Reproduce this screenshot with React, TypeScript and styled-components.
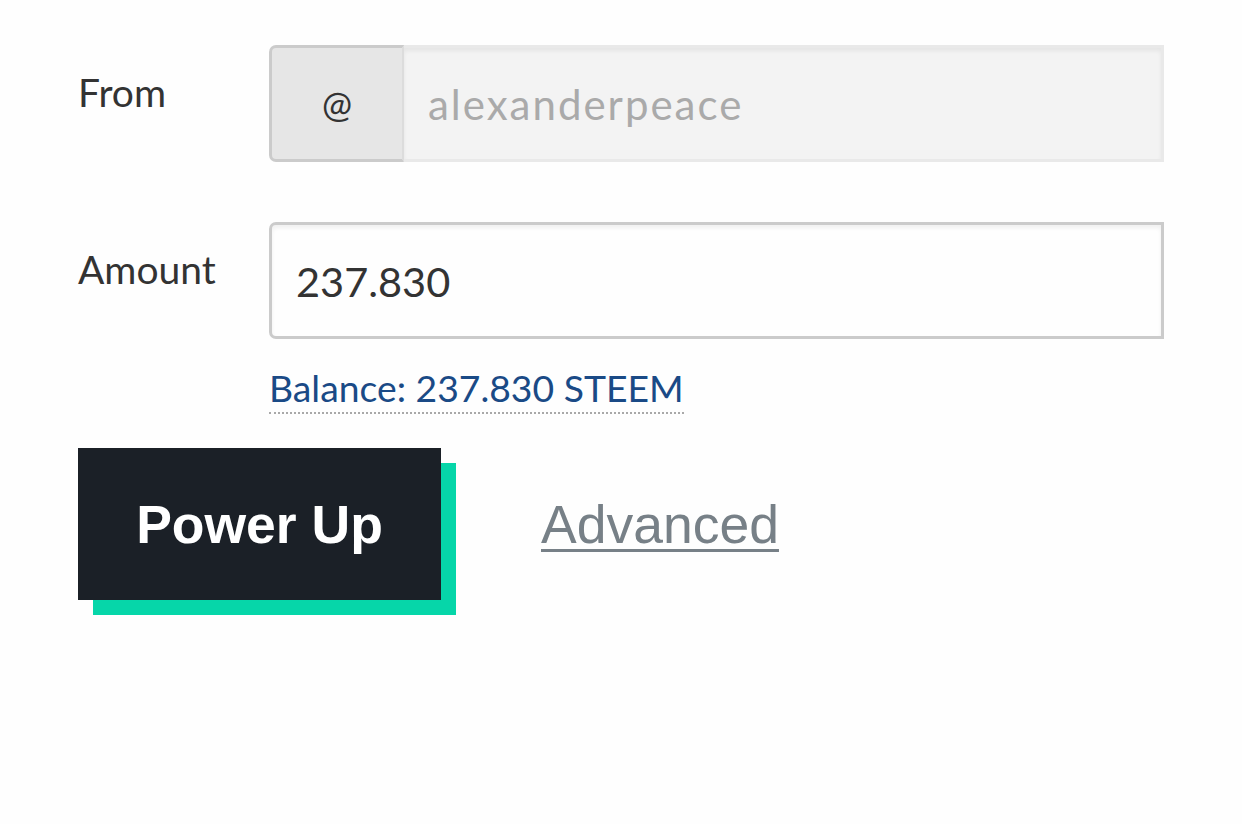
import React from "react";
import styled, { createGlobalStyle } from "styled-components";

const Global = createGlobalStyle`
  html, body { margin: 0; padding: 0; background: #fefefe; }
  body { font-family: Lato, "Liberation Sans", sans-serif; }
`;

const Page = styled.div`
  width: 1242px;
  height: 824px;
  box-sizing: border-box;
  padding: 45px 78px 0 78px;
  background: #fefefe;
`;

const Row = styled.div<{ $mb: number }>`
  display: grid;
  grid-template-columns: 191px 1fr;
  margin-bottom: ${(p) => p.$mb}px;
`;

const Label = styled.div`
  font-family: Lato, "Liberation Sans", sans-serif;
  font-size: 39px;
  color: #333;
  padding-top: 28px;
  line-height: 1;
`;

const Field = styled.div`
  display: flex;
  flex-direction: column;
`;

const Group = styled.div`
  display: flex;
  height: 117px;
  box-sizing: border-box;
`;

const Prefix = styled.div`
  width: 135px;
  box-sizing: border-box;
  display: flex;
  align-items: center;
  justify-content: center;
  background: #e6e6e6;
  border: 3px solid #cbcbcb;
  border-right: 2px solid #dcdcdc;
  border-radius: 7px 0 0 7px;
  font-size: 36px;
  color: #333;
`;

const Input = styled.div<{ $disabled?: boolean }>`
  flex: 1;
  box-sizing: border-box;
  display: flex;
  align-items: center;
  padding-left: 24px;
  font-size: ${(p) => (p.$disabled ? 42 : 41.5)}px;
  letter-spacing: ${(p) => (p.$disabled ? 2 : 0)}px;
  color: ${(p) => (p.$disabled ? "#aaaaaa" : "#333")};
  background: ${(p) => (p.$disabled ? "#f3f3f3" : "#fefefe")};
  border: 3px solid ${(p) => (p.$disabled ? "#e9e9e9" : "#cbcbcb")};
  border-left-width: ${(p) => (p.$disabled ? 0 : 3)}px;
  border-radius: ${(p) => (p.$disabled ? "0" : "7px 0 0 7px")};
  box-shadow: inset 0 3px 4px rgba(0, 0, 0, 0.06);
`;

const Balance = styled.span`
  align-self: flex-start;
  margin-top: 28px;
  font-size: 37.3px;
  color: #1a4a86;
  line-height: 1.1;
  border-bottom: 2px dotted #a9a9a9;
  padding-bottom: 4px;
`;

const Actions = styled.div`
  display: flex;
  align-items: center;
  gap: 100px;
  margin-top: 1px;
`;

const Button = styled.button`
  width: 363px;
  height: 152px;
  border: none;
  background: #1b2027;
  color: #fff;
  font-family: "Liberation Sans", Arial, sans-serif;
  font-weight: 700;
  font-size: 53.5px;
  box-shadow: 15px 15px 0 #06d6a9;
  cursor: pointer;
  padding: 0;
`;

const Advanced = styled.a`
  font-family: "Liberation Sans", Arial, sans-serif;
  font-size: 53.5px;
  color: #778087;
  text-decoration: underline;
  text-decoration-thickness: 3px;
  text-underline-offset: 6px;
`;

export default function App() {
  return (
    <>
      <Global />
      <Page>
        <Row $mb={60}>
          <Label>From</Label>
          <Group>
            <Prefix>@</Prefix>
            <Input $disabled>alexanderpeace</Input>
          </Group>
        </Row>
        <Row $mb={34}>
          <Label>Amount</Label>
          <Field>
            <Group>
              <Input>237.830</Input>
            </Group>
            <Balance>Balance: 237.830 STEEM</Balance>
          </Field>
        </Row>
        <Actions>
          <Button>Power Up</Button>
          <Advanced href="#">Advanced</Advanced>
        </Actions>
      </Page>
    </>
  );
}
